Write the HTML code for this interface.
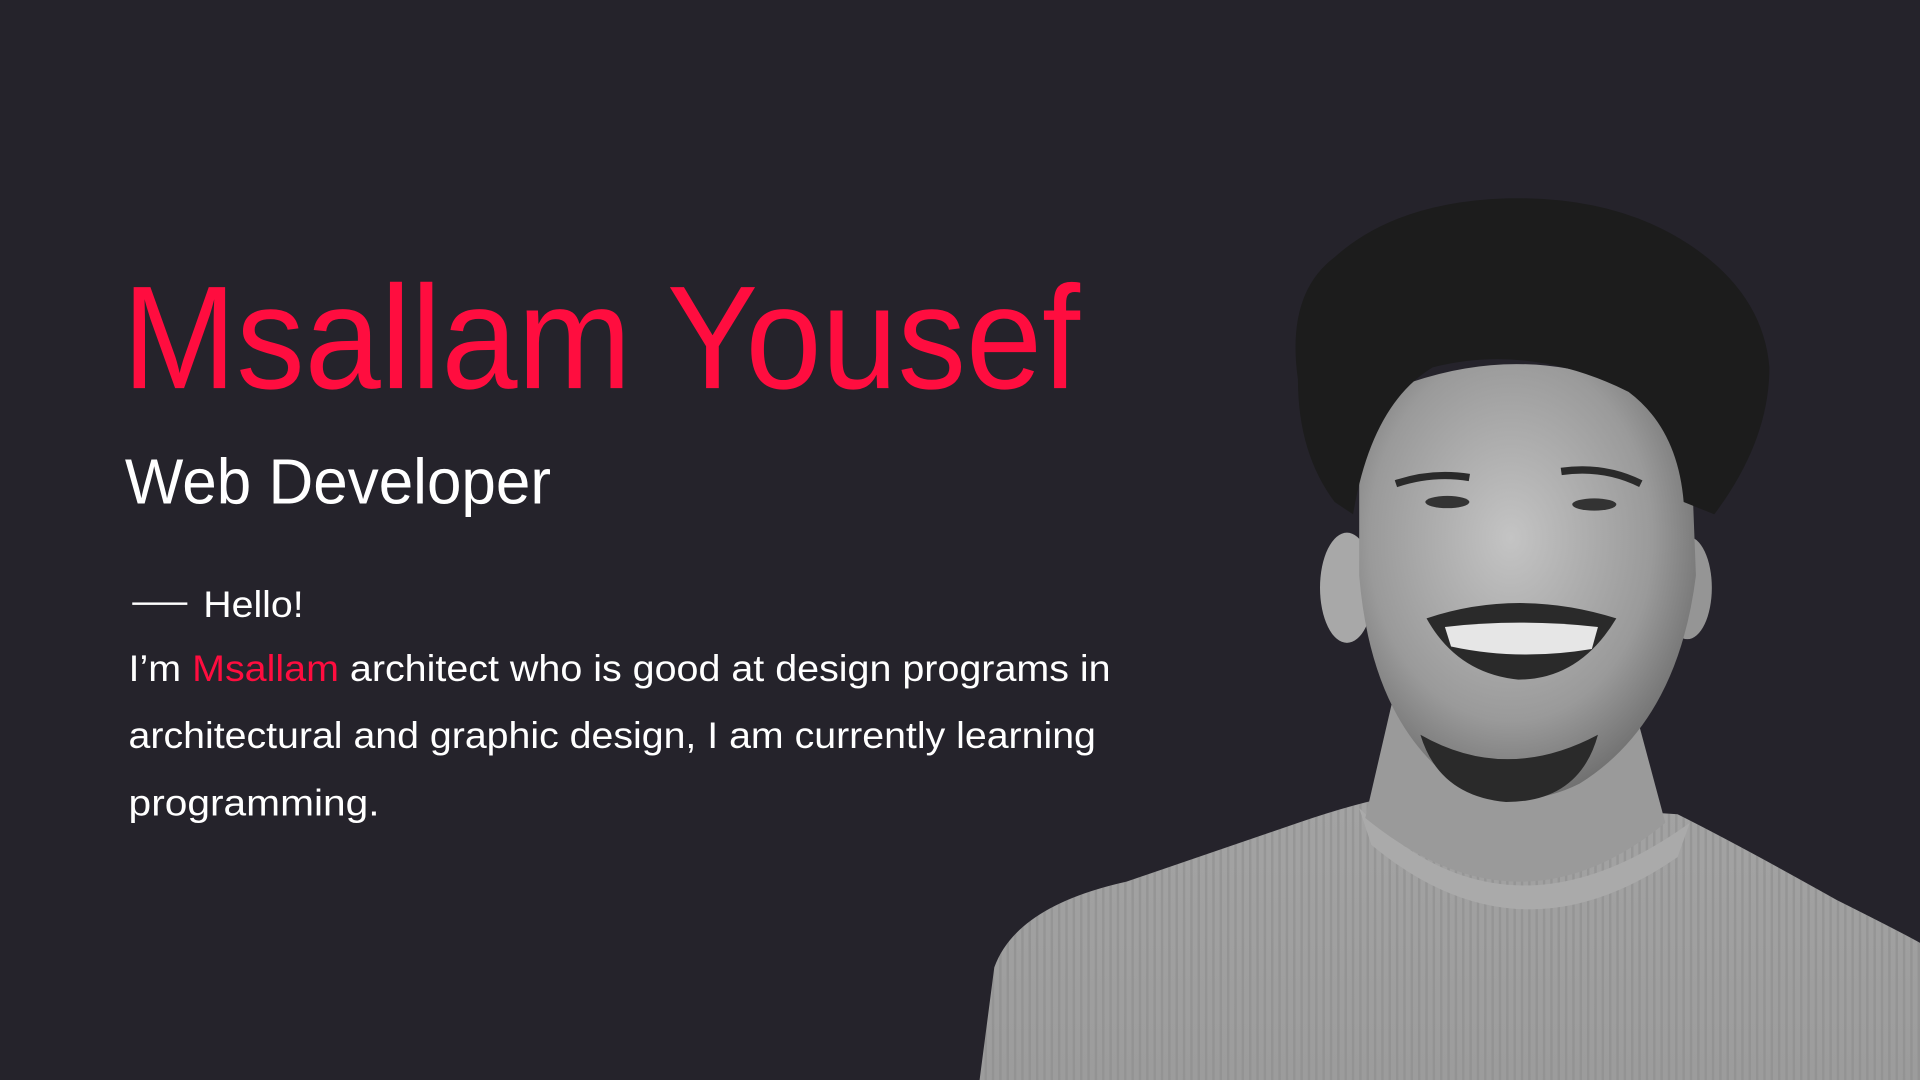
<!DOCTYPE html>
<html><head><meta charset="utf-8"><style>
html,body{margin:0;padding:0;background:#25232b;overflow:hidden}
svg{display:block}
</style></head><body>
<svg width="1920" height="1080" viewBox="0 0 1568 882" xmlns="http://www.w3.org/2000/svg">
<defs>
<radialGradient id="face" cx="0.45" cy="0.4" r="0.7">
<stop offset="0" stop-color="#c4c4c4"/><stop offset="0.6" stop-color="#9a9a9a"/><stop offset="1" stop-color="#5a5a5a"/>
</radialGradient>
<linearGradient id="sw" x1="0" y1="0" x2="0" y2="1">
<stop offset="0" stop-color="#b8b8b8"/><stop offset="1" stop-color="#9c9c9c"/>
</linearGradient>
<pattern id="rib" width="6" height="882" patternUnits="userSpaceOnUse">
<rect width="6" height="882" fill="url(#sw)"/><rect width="2" height="882" fill="#8a8a8a" opacity="0.5"/>
</pattern>
</defs>
<rect width="1568" height="882" fill="#25232b"/>
<text x="100" y="317" font-family="Liberation Sans, sans-serif" font-size="120" fill="#ff0d3f" textLength="782" lengthAdjust="spacingAndGlyphs">Msallam Yousef</text>
<text x="102" y="411" font-family="Liberation Sans, sans-serif" font-size="52" fill="#ffffff" textLength="348" lengthAdjust="spacingAndGlyphs">Web Developer</text>
<rect x="108" y="492" width="45" height="2" fill="#fff"/>
<text x="166" y="504" font-family="Liberation Sans, sans-serif" font-size="30" fill="#fff" textLength="82" lengthAdjust="spacingAndGlyphs">Hello!</text>
<text x="105" y="556" font-family="Liberation Sans, sans-serif" font-size="30" fill="#fff" textLength="802" lengthAdjust="spacingAndGlyphs">I’m  <tspan fill="#ff0d3f">Msallam</tspan> architect who is good at design programs in</text>
<text x="105" y="611" font-family="Liberation Sans, sans-serif" font-size="30" fill="#fff" textLength="790" lengthAdjust="spacingAndGlyphs">architectural and graphic design, I am currently learning</text>
<text x="105" y="666" font-family="Liberation Sans, sans-serif" font-size="30" fill="#fff" textLength="205" lengthAdjust="spacingAndGlyphs">programming.</text>
<path d="M800 882 L812 790 Q830 740 920 720 L1060 672 Q1110 655 1140 650 L1370 665 Q1420 690 1500 735 Q1550 760 1568 770 L1568 882 Z" fill="url(#rib)"/>
<path d="M1110 660 Q1230 780 1380 672 L1370 700 Q1240 790 1120 690 Z" fill="#aaaaaa"/>
<path d="M1140 560 L1330 560 L1360 672 Q1240 770 1115 668 Z" fill="#9a9a9a"/>
<ellipse cx="1100" cy="480" rx="22" ry="45" fill="#a8a8a8"/>
<ellipse cx="1378" cy="480" rx="20" ry="42" fill="#959595"/>
<path d="M1110 330 Q1250 260 1380 340 L1385 470 Q1370 590 1290 640 Q1240 665 1190 640 Q1120 590 1110 470 Z" fill="url(#face)"/>
<path d="M1060 310 Q1050 240 1090 210 Q1140 165 1230 162 Q1320 160 1380 200 Q1440 240 1445 300 Q1445 360 1400 420 L1375 410 Q1370 350 1330 320 Q1250 280 1170 300 Q1120 330 1105 420 L1090 410 Q1060 370 1060 310 Z" fill="#1c1c1c"/>
<path d="M1140 395 Q1170 385 1200 390" stroke="#2a2a2a" stroke-width="6" fill="none"/>
<path d="M1275 385 Q1310 380 1340 395" stroke="#2a2a2a" stroke-width="6" fill="none"/>
<ellipse cx="1182" cy="410" rx="18" ry="5" fill="#333"/>
<ellipse cx="1302" cy="412" rx="18" ry="5" fill="#333"/>
<path d="M1165 505 Q1240 480 1320 505 Q1290 555 1240 555 Q1190 550 1165 505 Z" fill="#2a2a2a"/>
<path d="M1180 512 Q1240 505 1305 512 L1300 530 Q1240 540 1185 528 Z" fill="#e6e6e6"/>
<path d="M1160 600 Q1230 640 1305 600 Q1290 655 1230 655 Q1175 650 1160 600 Z" fill="#2a2a2a"/>
</svg>
</body></html>
